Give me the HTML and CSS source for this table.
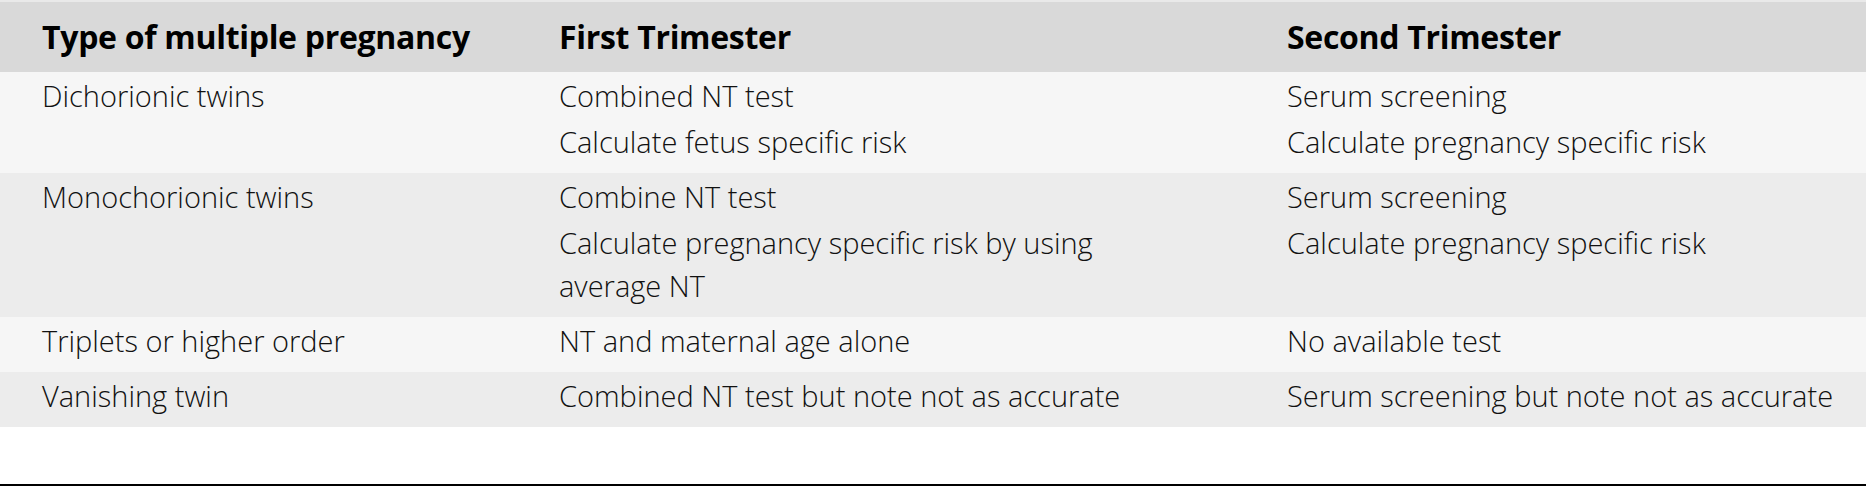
FILE: index.html
```html
<!DOCTYPE html>
<html lang="en">
<head>
<meta charset="utf-8">
<title>Screening in multiple pregnancy</title>
<link rel="stylesheet" href="styles.css">
</head>
<body>
<table class="screening">
  <colgroup>
    <col class="col-type">
    <col class="col-first">
    <col class="col-second">
  </colgroup>
  <thead>
    <tr class="head-row">
      <th class="c-type">Type of multiple pregnancy</th>
      <th class="c-first">First Trimester</th>
      <th class="c-second">Second Trimester</th>
    </tr>
  </thead>
  <tbody>
    <tr class="row-light">
      <td class="c-type"><p>Dichorionic twins</p></td>
      <td class="c-first"><p>Combined NT test</p><p>Calculate fetus specific risk</p></td>
      <td class="c-second"><p>Serum screening</p><p>Calculate pregnancy specific risk</p></td>
    </tr>
    <tr class="row-dark">
      <td class="c-type"><p>Monochorionic twins</p></td>
      <td class="c-first"><p>Combine NT test</p><p>Calculate pregnancy specific risk by using average NT</p></td>
      <td class="c-second"><p>Serum screening</p><p>Calculate pregnancy specific risk</p></td>
    </tr>
    <tr class="row-light">
      <td class="c-type"><p>Triplets or higher order</p></td>
      <td class="c-first"><p>NT and maternal age alone</p></td>
      <td class="c-second"><p>No available test</p></td>
    </tr>
    <tr class="row-dark">
      <td class="c-type"><p>Vanishing twin</p></td>
      <td class="c-first"><p>Combined NT test but note not as accurate</p></td>
      <td class="c-second"><p>Serum screening but note not as accurate</p></td>
    </tr>
  </tbody>
</table>
<div class="rule"></div>
</body>
</html>
```
FILE: styles.css
```css
html, body {
  margin: 0;
  padding: 0;
  background: #ffffff;
}

body {
  font-family: "Open Sans", "Noto Sans", "Liberation Sans", sans-serif;
  color: #111111;
}

.screening {
  width: 100%;
  table-layout: fixed;
  border-collapse: collapse;
  border-top: 2px solid #e9e9e9;
}

.col-type { width: 517px; }
.col-first { width: 728px; }

.screening th,
.screening td {
  text-align: left;
  vertical-align: top;
  padding: 2px 16px 10px 42px;
}

.screening .c-first {
  padding-right: 90px;
}

.head-row {
  background: #d9d9d9;
}

.screening th {
  font-weight: 700;
  font-size: 32px;
  line-height: 43px;
  letter-spacing: -0.3px;
  color: #000000;
  padding-top: 13px;
  padding-bottom: 14px;
  white-space: nowrap;
}

.row-light { background: #f6f6f6; }
.row-dark { background: #ececec; }

.screening td {
  font-weight: 300;
  font-size: 29px;
  line-height: 43px;
  letter-spacing: 0;
}

.screening td p {
  margin: 0;
}

.screening td p + p {
  margin-top: 3px;
}

.rule {
  margin-top: 57px;
  height: 2px;
  background: #000000;
}
```
